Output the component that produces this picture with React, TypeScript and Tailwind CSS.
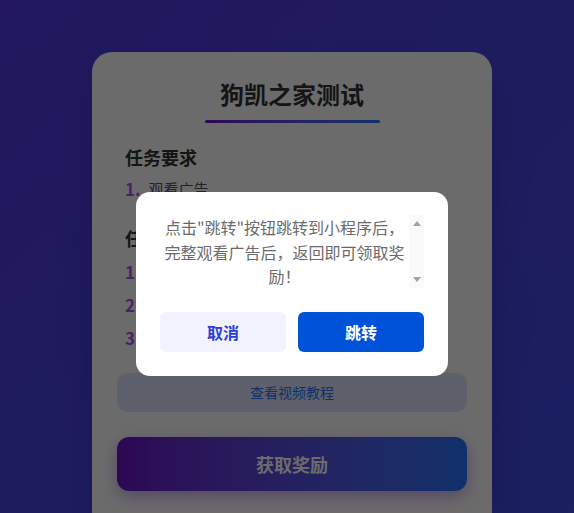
import React from "react";

const tasks = ["观看广告"];
const steps = ["点击下方获取奖励按钮", "跳转小程序观看完整广告", "返回本页面即可领取奖励"];

export default function App() {
  return (
    <div
      className="relative h-[513px] overflow-hidden bg-linear-to-br from-[#5137e0] to-[#404ce5]"
      style={{ fontFamily: '"Noto Sans CJK SC", "Noto Sans", sans-serif' }}
    >
      {/* Main card */}
      <div className="ml-[92px] mt-[52px] w-[400px] rounded-[20px] bg-white px-[25px] pt-[26px] pb-10 shadow-2xl">
        <div className="flex flex-col items-center">
          <h1 className="text-[24px] font-bold leading-8 text-[#333]">狗凯之家测试</h1>
          <div className="mt-[10px] h-[3px] w-[175px] rounded-full bg-linear-to-r from-[#6a11cb] to-[#2575fc]" />
        </div>

        <div className="mt-[21px] px-2">
          <h2 className="text-[18px] font-bold leading-[27px] text-[#333]">任务要求</h2>
          <ul className="mt-[6px] space-y-[9px]">
            {tasks.map((t, i) => (
              <li key={t} className="flex items-center gap-[8px] text-[15px] leading-6 text-[#555]">
                <span className="text-[17px] font-bold text-[#a855f7]">{i + 1}.</span>
                {t}
              </li>
            ))}
          </ul>
        </div>

        <div className="mt-[24px] px-2">
          <h2 className="text-[18px] font-bold leading-[27px] text-[#333]">任务步骤</h2>
          <ul className="mt-[8px] space-y-[9px]">
            {steps.map((t, i) => (
              <li key={t} className="flex items-center gap-[8px] text-[15px] leading-6 text-[#555]">
                <span className="text-[17px] font-bold text-[#a855f7]">{i + 1}.</span>
                {t}
              </li>
            ))}
          </ul>
        </div>

        <button className="mt-[23px] h-[39px] w-full rounded-[10px] bg-[#e0e7ff] text-[14px] text-[#2575fc]">
          查看视频教程
        </button>

        <button className="mt-[25px] h-[54px] w-full rounded-[12px] bg-linear-to-r from-[#6a11cb] to-[#2575fc] text-[18px] font-bold text-white shadow-[0_6px_16px_rgba(106,17,203,0.35)]">
          获取奖励
        </button>
      </div>

      {/* Overlay + dialog */}
      <div className="absolute inset-0 flex justify-center bg-black/[0.58] pt-[192px] pl-[10px]">
        <div className="h-[184px] w-[312px] rounded-[14px] bg-white px-6 pt-[23px]">
          <div className="flex h-[73px]">
            <div className="flex-1 overflow-hidden">
              <p className="mx-auto w-[242px] text-center text-[16px] leading-[24.5px] text-[#6b6b6b]">
                点击"跳转"按钮跳转到小程序后，完整观看广告后，返回即可领取奖励！
              </p>
            </div>
            {/* scrollbar */}
            <div className="flex w-[15px] flex-col items-center justify-between bg-[#fafafa] py-[6px]">
              <svg width="8" height="5" viewBox="0 0 8 5">
                <path d="M4 0 L8 5 L0 5 Z" fill="#a3a3a3" />
              </svg>
              <svg width="8" height="5" viewBox="0 0 8 5">
                <path d="M0 0 L8 0 L4 5 Z" fill="#a3a3a3" />
              </svg>
            </div>
          </div>
          <div className="mt-[24px] flex gap-3">
            <button className="h-10 flex-1 rounded-md bg-[#f2f2fe] text-[16px] font-bold text-[#2a3fd8]">
              取消
            </button>
            <button className="h-10 flex-1 rounded-md bg-[#0052d9] text-[16px] font-bold text-white">
              跳转
            </button>
          </div>
        </div>
      </div>
    </div>
  );
}
